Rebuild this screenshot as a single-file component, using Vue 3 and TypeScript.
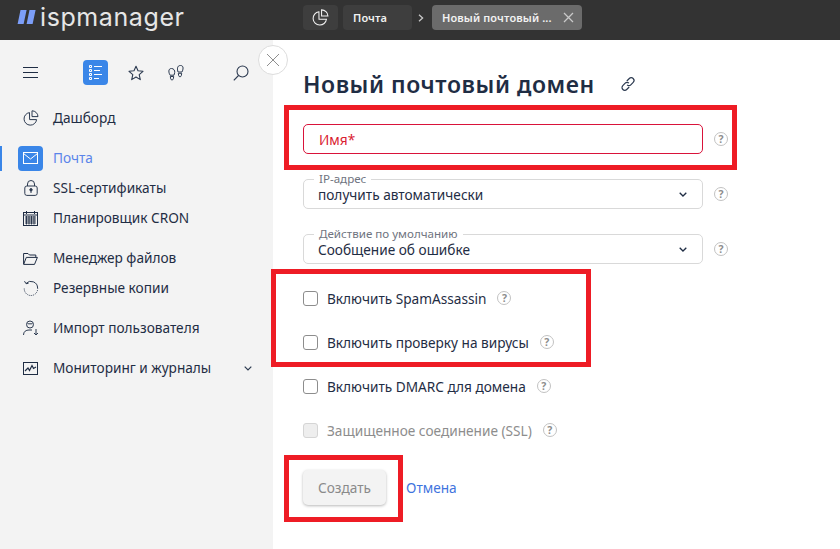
<script setup lang="ts">
interface NavItem { label: string; icon: string; top: number; active?: boolean; chevron?: boolean }
const nav: NavItem[] = [
  { label: 'Дашборд', icon: 'pie', top: 0 },
  { label: 'Почта', icon: 'mail', top: 10, active: true },
  { label: 'SSL-сертификаты', icon: 'lock', top: 0 },
  { label: 'Планировщик CRON', icon: 'cal', top: 0 },
  { label: 'Менеджер файлов', icon: 'folder', top: 10 },
  { label: 'Резервные копии', icon: 'backup', top: 0 },
  { label: 'Импорт пользователя', icon: 'user', top: 10 },
  { label: 'Мониторинг и журналы', icon: 'chart', top: 10, chevron: true },
]
const selects = [
  { label: 'IP-адрес', value: 'получить автоматически' },
  { label: 'Действие по умолчанию', value: 'Сообщение об ошибке' },
]
const checks = [
  { label: 'Включить SpamAssassin', gap: 0 },
  { label: 'Включить проверку на вирусы', gap: 0 },
  { label: 'Включить DMARC для домена', gap: 0 },
]
</script>

<template>
  <div class="page">
    <header class="top">
      <div class="logo">
        <svg width="20" height="16" viewBox="0 0 20 16"><path d="M3.500 1H9.600L6.600 15H.6ZM12.500 1H18.600L15.600 15H9.600Z" fill="#7c9ef8"/></svg>
        <span class="logo-text">ispmanager</span>
      </div>
      <div class="crumbs">
        <div class="crumb icon-crumb">
          <svg width="17" height="17" viewBox="0 0 16 16" fill="none" stroke="#f0f0f0" stroke-width="1"><path d="M6.500 2.600A6.300 6.300 0 1 0 13.600 9.600H6.600Z"/><path d="M9 .8A6 6 0 0 1 15 6.600H9Z"/></svg>
        </div>
        <div class="crumb mail-crumb">Почта</div>
        <svg class="sep" width="6" height="8" viewBox="0 0 6 8" fill="none" stroke="#c8c8c8" stroke-width="1.300"><path d="M1 .8 4.600 4 1 7.200"/></svg>
        <div class="crumb current">
          <span>Новый почтовый ...</span>
          <svg width="11" height="11" viewBox="0 0 11 11" stroke="#c9c9c9" stroke-width="1.300"><path d="M1 1 10 10M10 1 1 10"/></svg>
        </div>
      </div>
    </header>

    <div class="body">
      <aside class="side">
        <div class="tools">
          <svg class="burger" width="15" height="11" viewBox="0 0 15 11" stroke="#1f2d44"><path d="M0 .5H15M0 5.500H15M0 10.500H15"/></svg>
          <div class="tool-active">
            <svg width="14" height="15" viewBox="0 0 14 15" fill="none" stroke="#fff"><path d="M.5 .5h2v2h-2zM.5 4.500h2v2h-2zM.5 8.500h2v2h-2zM.5 12.500h2v2h-2z" stroke-width="1"/><path d="M5 1.500H13M5 5.500H11M5 9.500H13M5 13.500H10" stroke-width="1"/></svg>
          </div>
          <svg class="star" width="16" height="16" viewBox="0 0 16 16" fill="none" stroke="#2c3a50" stroke-width="1.100"><path d="M8 1.200 10 5.800 15 6.300 11.200 9.600 12.300 14.600 8 12 3.700 14.600 4.800 9.600 1 6.300 6 5.800Z" stroke-linejoin="round"/></svg>
          <svg class="steps" width="16" height="16" viewBox="0 0 16 16" fill="none" stroke="#2c3a50" stroke-width="1"><path d="M3.500 3.500C5.800 3.500 7 5.500 6.700 7.500L6 10.200H2C.8 8 -.3 3.500 3.500 3.500Z"/><path d="M2.300 11.500H5.700L5.300 13.800C5 15.400 3 15.400 2.700 13.800Z"/><path d="M12.500 .5C8.700 .5 9.300 4.500 10 7H14C15 5 16.300 .5 12.500 .5Z"/><path d="M10.300 8.300H13.700L13.300 10.600C13 12.200 11 12.200 10.700 10.600Z"/></svg>
          <svg class="search" width="16" height="16" viewBox="0 0 16 16" fill="none" stroke="#2c3a50" stroke-width="1.100"><circle cx="9.500" cy="6.500" r="5.500"/><path d="M5.500 10.500 .8 15.300"/></svg>
        </div>

        <nav class="nav">
          <div v-for="item in nav" :key="item.label" class="nav-item" :class="{ active: item.active, spaced: item.top }">
            <span class="nav-icon">
              <svg v-if="item.icon === 'pie'" width="16" height="16" viewBox="0 0 16 16" fill="none" stroke="#2c3a50" stroke-width="1"><path d="M6.500 2.600A6.300 6.300 0 1 0 13.600 9.600H6.600Z"/><path d="M9 .8A6 6 0 0 1 15 6.600H9Z"/></svg>
              <svg v-else-if="item.icon === 'mail'" width="15" height="12" viewBox="0 0 15 12" fill="none" stroke="#fff" stroke-width="1"><rect x=".5" y=".5" width="14" height="11"/><path d="M.5 1.500 7.500 7 14.500 1.500"/></svg>
              <svg v-else-if="item.icon === 'lock'" width="14" height="16" viewBox="0 0 14 16" fill="none" stroke="#2c3a50" stroke-width="1"><rect x=".8" y="6" width="12.400" height="9.400" rx="2"/><path d="M3.500 6V4a3.500 3.500 0 0 1 7 0V6"/><circle cx="7" cy="9.800" r="1.200" fill="#2c3a50"/><path d="M7 10V13"/></svg>
              <svg v-else-if="item.icon === 'cal'" width="15" height="15" viewBox="0 0 15 15" fill="none" stroke="#1f2d44" stroke-width="1"><rect x=".5" y="1.500" width="14" height="13"/><path d="M.5 4H14.500M3.500 0V3M11.500 0V3" /><path d="M2 6H13M2 8H13M2 10H13M2 12H13M3.500 5V13.500M6 5V13.500M8.500 5V13.500M11 5V13.500" stroke-width=".9"/></svg>
              <svg v-else-if="item.icon === 'folder'" width="15" height="13" viewBox="0 0 15 13" fill="none" stroke="#1f2d44" stroke-width="1"><path d="M.6 12V1.500H5L6.500 3H12.800V5.200"/><path d="M.6 12.400H11.500L14.400 5.400H3.300Z"/></svg>
              <svg v-else-if="item.icon === 'backup'" width="16" height="16" viewBox="0 0 16 16" fill="none" stroke="#2c3a50" stroke-width="1"><path d="M3 3.500A6.700 6.700 0 0 1 14.600 8"/><path d="M14.600 8A6.700 6.700 0 1 1 1.300 8" stroke-dasharray="1 1"/><path d="M1.500 1.200 3 3.700 5.500 3.300"/></svg>
              <svg v-else-if="item.icon === 'user'" width="16" height="16" viewBox="0 0 16 16" fill="none" stroke="#2c3a50" stroke-width="1"><circle cx="7" cy="4.500" r="3.500"/><path d="M4.500 3.800H9.500"/><path d="M.5 15C.5 11.500 3 10 6 10H9"/><path d="M13 9V15M11 13 13 15 15 13"/></svg>
              <svg v-else-if="item.icon === 'chart'" width="15" height="13" viewBox="0 0 15 13" fill="none" stroke="#1f2d44" stroke-width="1"><rect x=".5" y=".5" width="14" height="12"/><path d="M2 9 5 6 6.500 8.500 9 3.500 10.500 6.500 13 5" stroke-width="1.200"/></svg>
            </span>
            <span class="nav-label">{{ item.label }}</span>
            <svg v-if="item.chevron" class="nav-chev" width="8" height="5" viewBox="0 0 8 5" fill="none" stroke="#2c3a50" stroke-width="1.200"><path d="M.7.7 4 4 7.300.7"/></svg>
          </div>
        </nav>
      </aside>

      <main class="main">
        <button class="close" aria-label="close">
          <svg width="16" height="16" viewBox="0 0 16 16" stroke="#8f8f8f" stroke-width="1"><path d="M2 2 14 14M14 2 2 14"/></svg>
        </button>
        <div class="title-row">
          <h1>Новый почтовый домен</h1>
          <svg width="16" height="16" viewBox="0 0 16 16" fill="none" stroke="#2c3a50" stroke-width="1.200"><path d="M6.800 5 9.300 2.500a2.600 2.600 0 0 1 3.900 3.800L10.800 8.800a2.600 2.600 0 0 1-3.700 0"/><path d="M9.200 11 6.700 13.500a2.600 2.600 0 0 1-3.900-3.800L5.200 7.200a2.600 2.600 0 0 1 3.700 0"/></svg>
        </div>

        <div class="field-row first">
          <div class="field error"><span class="value">Имя*</span></div>
          <span class="help big">?</span>
        </div>
        <div v-for="s in selects" :key="s.label" class="field-row">
          <div class="field select">
            <span class="legend">{{ s.label }}</span>
            <span class="value">{{ s.value }}</span>
            <svg width="8" height="5" viewBox="0 0 8 5" fill="none" stroke="#1f2d44" stroke-width="1.300"><path d="M.7.7 4 4 7.300.7"/></svg>
          </div>
          <span class="help big">?</span>
        </div>

        <div class="checks">
          <label v-for="c in checks" :key="c.label" class="check">
            <span class="box"></span>
            <span>{{ c.label }}</span>
            <span class="help">?</span>
          </label>
          <label class="check disabled">
            <span class="box"></span>
            <span>Защищенное соединение (SSL)</span>
            <span class="help">?</span>
          </label>
        </div>

        <div class="actions">
          <button class="create">Создать</button>
          <a class="cancel">Отмена</a>
        </div>

        <div class="mark mark-a"></div>
        <div class="mark mark-b"></div>
        <div class="mark mark-c"></div>
      </main>
    </div>
  </div>
</template>

<style>
html, body { margin: 0; padding: 0; background: #fff; overflow: hidden; }
</style>

<style scoped>
.page { width: 840px; height: 549px; display: flex; flex-direction: column; font-family: "Noto Sans", "Open Sans", sans-serif; color: #1f2d44; font-size: 13.65px; overflow: hidden; }
.top { height: 40px; background: #333; display: flex; align-items: flex-start; flex: none; }
.logo { width: 303px; padding: 0 0 0 17px; box-sizing: border-box; display: flex; align-items: center; height: 34px; gap: 3px; }
.logo-text { font-family: "Inter", sans-serif; font-size: 25px; color: #e6e6e6; font-weight: 400; letter-spacing: .6px; line-height: 34px; }
.crumbs { display: flex; align-items: center; padding-top: 5px; }
.crumb { height: 25px; border-radius: 4px; background: #3e3e3e; color: #f2f2f2; display: flex; align-items: center; box-sizing: border-box; font-size: 11px; font-weight: 600; letter-spacing: .12px; }
.icon-crumb { width: 35px; justify-content: center; margin-right: 5px; }
.mail-crumb { width: 69px; padding-left: 10px; }
.sep { margin: 0 8px 0 6px; }
.current { width: 150px; padding: 0 8px 0 10px; background: #6b6b6b; justify-content: space-between; }
.body { flex: 1; display: flex; min-height: 0; }
.side { width: 273px; background: #f3f3f3; flex: none; }
.tools { height: 25px; margin-top: 20px; position: relative; display: flex; align-items: center; }
.burger { margin-left: 23px; }
.tool-active { width: 25px; height: 25px; margin-left: 45px; border-radius: 4px; background: #3a86e8; display: flex; align-items: center; justify-content: center; }
.star { margin-left: 20px; }
.steps { margin-left: 24px; }
.search { margin-left: 49px; }
.nav { margin-top: 18px; }
.nav-item { height: 30px; display: flex; align-items: center; position: relative; padding-left: 18px; }
.nav-item.spaced { margin-top: 10px; }
.nav-icon { width: 25px; height: 25px; display: flex; align-items: center; justify-content: center; border-radius: 4px; margin-right: 10px; flex: none; }
.nav-label { margin-bottom: 2px; }
.nav-item.active .nav-icon { background: #3a86e8; }
.nav-item.active .nav-label { color: #5a84ea; }
.nav-item.active::before { content: ""; position: absolute; left: 0; top: 3px; width: 2px; height: 25px; background: #3a86e8; }
.nav-chev { position: absolute; left: 244px; top: 13px; }
.main { flex: 1; position: relative; padding-left: 30px; }
.close { position: absolute; left: -15px; top: 5px; width: 30px; height: 30px; border-radius: 50%; background: #fff; border: 1px solid #ddd; padding: 0; display: flex; align-items: center; justify-content: center; box-sizing: border-box; }
.title-row { display: flex; align-items: center; height: 30px; margin-top: 29px; gap: 25px; }
h1 { margin: 0; font-family: "Noto Sans", sans-serif; font-size: 23px; font-weight: 600; color: #1f2d44; letter-spacing: .55px; line-height: 30px; }
.field-row { display: flex; align-items: center; margin-top: 25px; height: 30px; }
.field-row.first { margin-top: 25px; }
.field { width: 400px; height: 30px; box-sizing: border-box; border: 1px solid #d9d9d9; border-radius: 5px; display: flex; align-items: center; position: relative; }
.field.error { border-color: #d9133a; color: #d92030; padding-left: 15px; }
.select { padding: 0 15px 0 14px; justify-content: space-between; }
.value { margin-top: 2px; line-height: 16px; }
.legend { position: absolute; left: 10px; top: -7px; background: #fff; padding: 0 5px; font-size: 11.6px; line-height: 12px; color: #6f7480; }
.help { width: 14px; height: 14px; border: 1.5px solid #c2c2c2; border-radius: 50%; box-sizing: border-box; color: #8d8d8d; font-size: 10.5px; font-weight: 700; display: inline-flex; align-items: center; justify-content: center; margin-left: 11px; line-height: 1; }
.help.big { margin-left: 11px; }
.checks { margin-top: 12px; }
.check { display: flex; align-items: center; height: 44px; }
.box { width: 15px; height: 15px; box-sizing: border-box; border: 1px solid #8d8d8d; border-radius: 3px; background: #fff; margin-right: 9px; }
.disabled { color: #8d8d8d; }
.disabled .box { background: #eee; border-color: #d5d5d5; }
.actions { margin-top: 18px; display: flex; align-items: center; }
.create { width: 83px; height: 35px; background: #f3f3f3; border: 0; border-radius: 5px; color: #8a8a8a; font-family: inherit; font-size: 13.65px; box-shadow: 0 1px 3px rgba(0,0,0,.28); padding: 0; }
.cancel { margin-left: 20px; color: #3f74de; }
.mark { position: absolute; border: 5px solid #ee1c25; box-sizing: border-box; pointer-events: none; }
.mark-a { left: 11px; top: 65px; width: 453px; height: 65px; }
.mark-b { left: -2px; top: 229px; width: 320px; height: 98px; }
.mark-c { left: 11px; top: 415px; width: 119px; height: 67px; }
</style>
